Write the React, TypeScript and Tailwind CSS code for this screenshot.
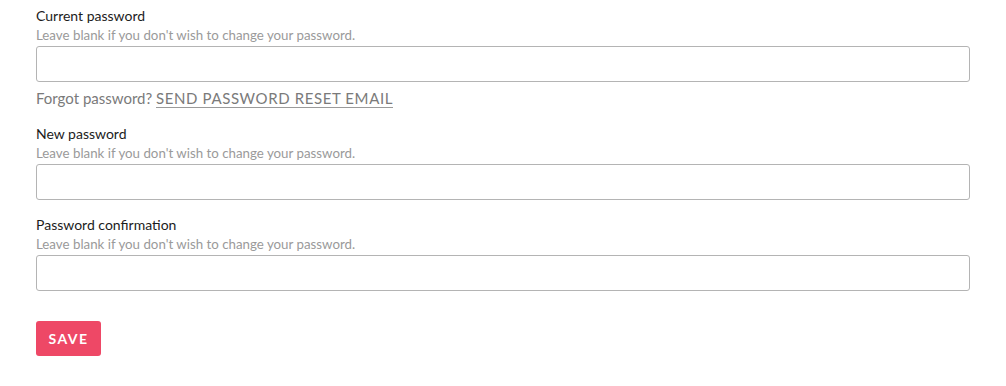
import { useState } from 'react';

const HELP = "Leave blank if you don't wish to change your password.";

function PasswordField({
  label,
  value,
  onChange,
}: {
  label: string;
  value: string;
  onChange: (v: string) => void;
}) {
  return (
    <div>
      <label className="block text-[14px] leading-[20px] text-[#1c1c1c]">{label}</label>
      <p className="text-[13.3px] leading-[18px] text-[#9a9a9a] mb-[2px]">{HELP}</p>
      <input
        type="password"
        value={value}
        onChange={e => onChange(e.target.value)}
        className="block w-full h-[36px] bg-white border border-[#b4b4b4] rounded-[3px] px-3 text-[14px] focus:outline-none"
      />
    </div>
  );
}

export default function App() {
  const [current, setCurrent] = useState('');
  const [next, setNext] = useState('');
  const [confirm, setConfirm] = useState('');

  return (
    <div className="min-h-[386px] bg-white px-[36px] pt-[6px] font-['Lato','Liberation_Sans',sans-serif]">
      <form onSubmit={e => e.preventDefault()}>
        <PasswordField label="Current password" value={current} onChange={setCurrent} />

        <p className="mt-[6px] text-[15px] leading-[20px] text-[#7a7a7a]">
          Forgot password?{' '}
          <a href="#" className="uppercase tracking-[0.04em] text-[#7a7a7a] border-b border-[#9a9a9a]">
            Send password reset email
          </a>
        </p>

        <div className="mt-[16px]">
          <PasswordField label="New password" value={next} onChange={setNext} />
        </div>

        <div className="mt-[15px]">
          <PasswordField label="Password confirmation" value={confirm} onChange={setConfirm} />
        </div>

        <button
          type="submit"
          className="mt-[30px] h-[35px] w-[65px] rounded-[3px] bg-[#ee4866] text-white text-[14px] font-bold uppercase tracking-[0.1em]"
        >
          Save
        </button>
      </form>
    </div>
  );
}
